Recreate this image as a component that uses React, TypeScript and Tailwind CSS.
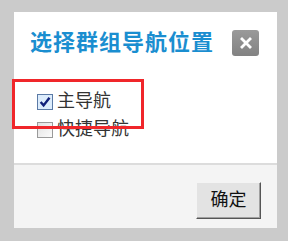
import React from 'react';

const font = { fontFamily: '"Liberation Sans", "Noto Sans CJK SC", sans-serif' };

function Check({ checked }: { checked: boolean }) {
  return (
    <span
      className={`flex h-[16px] w-[16px] items-center justify-center border ${
        checked ? 'border-[#5b7aa6] bg-[#dcecfc]' : 'border-[#9a9a9a] bg-gradient-to-br from-[#e2e2e2] to-[#fbfbfb]'
      }`}
    >
      {checked && (
        <svg width="12" height="12" viewBox="0 0 11 11">
          <path d="M1.5 5.5 L4.2 8.6 L9.6 1.6" fill="none" stroke="#10207a" strokeWidth="2.2" />
        </svg>
      )}
    </span>
  );
}

export default function App() {
  const options = [
    { id: 'main', label: '主导航', checked: true },
    { id: 'quick', label: '快捷导航', checked: false },
  ];

  return (
    <div
      className="relative h-[241px] w-[288px] bg-[#cbcbcb] pl-[14px] pr-[11px] pt-[12px] pb-[13px]"
      style={font}
    >
      <div className="flex h-full flex-col">
        <div className="flex-1 bg-white">
          <div className="flex items-center justify-between pl-[16px] pr-[18px] pt-[18px]">
            <h1 className="text-[22px] font-bold leading-[26px] tracking-[1px] text-[#1a8ed0]">选择群组导航位置</h1>
            <button className="flex h-[26px] w-[27px] items-center justify-center rounded-[3px] bg-gradient-to-b from-[#9a9a9a] to-[#828282]">
              <svg width="12" height="12" viewBox="0 0 12 12">
                <path d="M2 2 L10 10 M10 2 L2 10" stroke="#fff" strokeWidth="2.8" strokeLinecap="square" />
              </svg>
            </button>
          </div>
          <div className="flex flex-col gap-[7px] pl-[23px] pt-[35px]">
            {options.map((o) => (
              <label key={o.id} className="flex items-center gap-[4px] text-[18px] leading-[21px] text-[#333]">
                <Check checked={o.checked} />
                <span>{o.label}</span>
              </label>
            ))}
          </div>
        </div>
        <div className="flex h-[65px] items-start justify-end border-t-2 border-[#dcdcdc] bg-[#f4f4f4] pr-[16px] pt-[17px]">
          <button className="h-[37px] w-[65px] border border-t-[#f4f4f4] border-l-[#f4f4f4] border-b-[#555] border-r-[#555] bg-[#e3e3e3] text-[18px] text-[#111] shadow-[inset_-1px_-1px_0_#a0a0a0]">
            确定
          </button>
        </div>
      </div>
      <div className="absolute left-[12px] top-[79px] h-[50px] w-[132px] border-[3px] border-[#f0262a]" />
    </div>
  );
}
